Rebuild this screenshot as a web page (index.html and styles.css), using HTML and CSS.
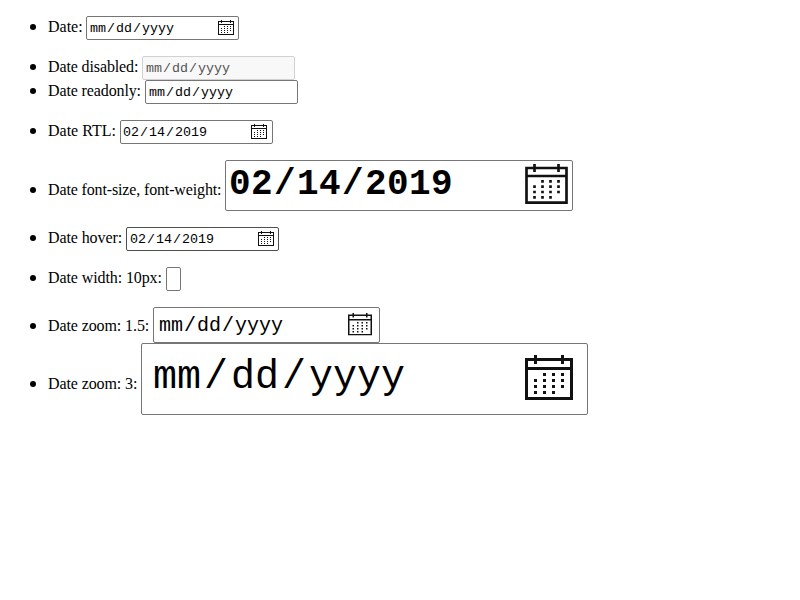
FILE: index.html
```html
<!DOCTYPE html>
<html lang="en">
<head>
<meta charset="utf-8">
<title>Date inputs</title>
<link rel="stylesheet" href="styles.css">
</head>
<body>
<svg class="defs" width="0" height="0"><symbol id="cal" viewBox="0 0 16 15"><path fill="#111" fill-rule="evenodd" d="M0 1H3V0H4V1H12V0H13V1H16V15H0ZM1 2V4H15V2H13V3H12V2H4V3H3V2ZM1 5V14H15V5ZM6 6h1v1h-1zM9 6h1v1h-1zM12 6h1v1h-1zM3 8h1v1h-1zM6 8h1v1h-1zM9 8h1v1h-1zM12 8h1v1h-1zM3 10h1v1h-1zM6 10h1v1h-1zM9 10h1v1h-1zM12 10h1v1h-1zM3 12h1v1h-1zM6 12h1v1h-1zM9 12h1v1h-1z"/></symbol></svg>
<ul>
<li><span class="label w-date">Date:</span><div class="field"><b>mm</b>/<b>dd</b>/<b>yyyy</b><svg class="icon"><use href="#cal"/></svg></div></li>
</ul>
<ul>
<li><span class="label w-disabled">Date disabled:</span><div class="field disabled"><b>mm</b>/<b>dd</b>/<b>yyyy</b></div></li>
<li><span class="label w-readonly">Date readonly:</span><div class="field"><b>mm</b>/<b>dd</b>/<b>yyyy</b></div></li>
</ul>
<ul>
<li><span class="label w-rtl">Date RTL:</span><div class="field rtl"><b>02</b>/<b>14</b>/<b>2019</b><svg class="icon"><use href="#cal"/></svg></div></li>
</ul>
<ul>
<li class="row-bold"><span class="label w-bold">Date font-size, font-weight:</span><div class="field bold"><b>02</b>/<b>14</b>/<b>2019</b><svg class="icon"><use href="#cal"/></svg></div></li>
</ul>
<ul>
<li><span class="label w-hover">Date hover:</span><div class="field hover"><b>02</b>/<b>14</b>/<b>2019</b><svg class="icon"><use href="#cal"/></svg></div></li>
</ul>
<ul>
<li><span class="label w-narrow">Date width: 10px:</span><div class="field narrow"></div></li>
</ul>
<ul>
<li class="row-medium"><span class="label w-medium">Date zoom: 1.5:</span><div class="field medium"><b>mm</b>/<b>dd</b>/<b>yyyy</b><svg class="icon"><use href="#cal"/></svg></div></li>
<li class="row-large"><span class="label w-large">Date zoom: 3:</span><div class="field large"><b>mm</b>/<b>dd</b>/<b>yyyy</b><svg class="icon"><use href="#cal"/></svg></div></li>
</ul>
</body>
</html>
```
FILE: styles.css
```css
* { box-sizing: border-box; }
body { margin: 16px 8px; font: 16px/18px "Liberation Serif", serif; color: #000; background: #fff; }
.defs { position: absolute; }
ul { list-style: none; margin: 0 0 16px; padding: 0 0 0 22px; }
li { display: flex; align-items: flex-start; }
li::before { content: ""; width: 6px; height: 6px; margin: 8px 12px 0 0; border-radius: 50%; background: #000; }
.label { margin-top: 2px; white-space: nowrap; }
.w-date { width: 38px; }
.w-disabled { width: 94px; letter-spacing: -0.12px; }
.w-readonly { width: 97px; letter-spacing: -0.12px; }
.w-rtl { width: 72px; }
.w-bold { width: 177px; letter-spacing: -0.14px; }
.w-hover { width: 78px; letter-spacing: -0.1px; }
.w-narrow { width: 118px; letter-spacing: -0.1px; }
.w-medium { width: 105px; letter-spacing: -0.1px; }
.w-large { width: 93px; letter-spacing: -0.1px; }
.field {
  display: flex; align-items: center; flex: none;
  width: 153px; height: 24px; padding: 0 4px 0 2px;
  border: 1px solid #767676; border-radius: 2px; background: #fff;
  font: 13.333px/15px "Liberation Mono", monospace; white-space: pre;
}
.field b { padding: 0 1px; font-weight: inherit; }
.icon { align-self: flex-start; width: 16px; height: 15px; margin: 3px 0 0 auto; }
.disabled { color: #545454; border-color: #d1d1d1; background: #f8f8f8; }
.rtl { padding-left: 1px; padding-right: 5px; }
.hover { border-color: #4f4f4f; }
.narrow { width: 15px; padding: 0; }
.bold { width: 348px; height: 51px; padding: 0 4px 1px 2px; font-size: 36px; line-height: 42px; font-weight: bold; letter-spacing: 0.4px; }
.bold .icon { width: 43px; height: 40px; }
.medium { width: 227px; height: 36px; padding: 0 7px 0 4px; font-size: 20px; line-height: 23px; }
.medium .icon { width: 24px; height: 22.5px; margin-top: 5px; }
.large { width: 447px; height: 72px; padding: 0 14px 3px 8px; font-size: 40px; line-height: 45px; }
.large b { padding: 0 3px; }
.large .icon { width: 48px; height: 45px; margin-top: 11px; }
.row-bold::before { margin-top: 27px; }
.row-bold .label { margin-top: 21px; }
.row-medium::before { margin-top: 16px; }
.row-medium .label { margin-top: 10px; }
.row-large::before { margin-top: 38px; }
.row-large .label { margin-top: 32px; }
```
